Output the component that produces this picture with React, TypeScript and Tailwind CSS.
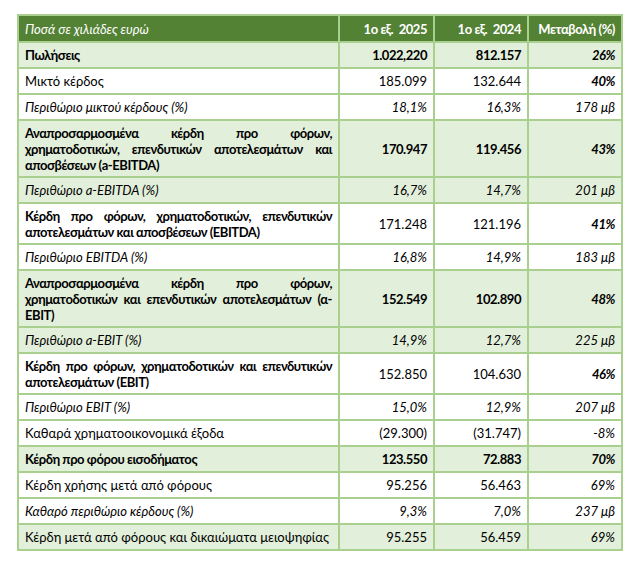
import React from "react";

// ─── Data ─────────────────────────────────────────────────────────────────

type Row = {
  label: string;
  v25: string;
  v24: string;
  change: string;
  tone?: "green";
  style: "bold" | "italic" | "plain";
  valuesBold?: boolean;
  changeBold?: boolean;
};

const ROWS: Row[] = [
  { label: "Πωλήσεις", v25: "1.022,220", v24: "812.157", change: "26%", tone: "green", style: "bold", valuesBold: true, changeBold: true },
  { label: "Μικτό κέρδος", v25: "185.099", v24: "132.644", change: "40%", style: "plain", changeBold: true },
  { label: "Περιθώριο μικτού κέρδους (%)", v25: "18,1%", v24: "16,3%", change: "178 μβ", style: "italic" },
  {
    label: "Αναπροσαρμοσμένα κέρδη προ φόρων, χρηματοδοτικών, επενδυτικών αποτελεσμάτων και αποσβέσεων (a-EBITDA)",
    v25: "170.947", v24: "119.456", change: "43%", tone: "green", style: "bold", valuesBold: true, changeBold: true,
  },
  { label: "Περιθώριο a-EBITDA (%)", v25: "16,7%", v24: "14,7%", change: "201 μβ", tone: "green", style: "italic" },
  {
    label: "Κέρδη προ φόρων, χρηματοδοτικών, επενδυτικών αποτελεσμάτων και αποσβέσεων (EBITDA)",
    v25: "171.248", v24: "121.196", change: "41%", style: "bold", changeBold: true,
  },
  { label: "Περιθώριο EBITDA (%)", v25: "16,8%", v24: "14,9%", change: "183 μβ", style: "italic" },
  {
    label: "Αναπροσαρμοσμένα κέρδη προ φόρων, χρηματοδοτικών και επενδυτικών αποτελεσμάτων (α-EBIT)",
    v25: "152.549", v24: "102.890", change: "48%", tone: "green", style: "bold", valuesBold: true, changeBold: true,
  },
  { label: "Περιθώριο a-EBIT (%)", v25: "14,9%", v24: "12,7%", change: "225 μβ", tone: "green", style: "italic" },
  {
    label: "Κέρδη προ φόρων, χρηματοδοτικών και επενδυτικών αποτελεσμάτων (EBIT)",
    v25: "152.850", v24: "104.630", change: "46%", style: "bold", changeBold: true,
  },
  { label: "Περιθώριο EBIT (%)", v25: "15,0%", v24: "12,9%", change: "207 μβ", style: "italic" },
  { label: "Καθαρά χρηματοοικονομικά έξοδα", v25: "(29.300)", v24: "(31.747)", change: "-8%", style: "plain" },
  { label: "Κέρδη προ φόρου εισοδήματος", v25: "123.550", v24: "72.883", change: "70%", tone: "green", style: "bold", valuesBold: true, changeBold: true },
  { label: "Κέρδη χρήσης μετά από φόρους", v25: "95.256", v24: "56.463", change: "69%", style: "plain" },
  { label: "Καθαρό περιθώριο κέρδους (%)", v25: "9,3%", v24: "7,0%", change: "237 μβ", style: "italic" },
  { label: "Κέρδη μετά από φόρους και δικαιώματα μειοψηφίας", v25: "95.255", v24: "56.459", change: "69%", tone: "green", style: "plain" },
];

// ─── Component ────────────────────────────────────────────────────────────

export default function App() {
  const cell = "border-2 border-[#a9d08e] px-[6px] py-[3.5px] align-middle";
  const num = `${cell} text-right`;
  const bold = "font-bold tracking-[-0.45px]";

  return (
    <div className="min-h-[563px] w-[640px] bg-white pt-[14px] pl-[17px] font-['Lato',sans-serif] text-[13px] leading-[16px] text-black">
      <table className="w-[606px] table-fixed border-collapse">
        <colgroup>
          <col className="w-[321px]" />
          <col className="w-[95px]" />
          <col className="w-[94px]" />
          <col className="w-[94px]" />
        </colgroup>
        <thead>
          <tr className="h-[27px] bg-[#548235] text-white">
            <th className={`${cell} text-left font-normal italic`}>Ποσά σε χιλιάδες ευρώ</th>
            <th className={`${num} ${bold} whitespace-pre`}>1ο εξ.  2025</th>
            <th className={`${num} ${bold} whitespace-pre`}>1ο εξ.  2024</th>
            <th className={`${num} ${bold} whitespace-nowrap`}>Μεταβολή (%)</th>
          </tr>
        </thead>
        <tbody>
          {ROWS.map((r) => {
            const labelCls =
              r.style === "bold" ? bold : r.style === "italic" ? "italic" : "";
            const valueCls = r.style === "italic" ? "italic" : r.valuesBold ? bold : "";
            return (
              <tr key={r.label} className={`h-[26px] ${r.tone === "green" ? "bg-[#e2efda]" : "bg-white"}`}>
                <td className={`${cell} text-justify ${labelCls}`}>{r.label}</td>
                <td className={`${num} ${valueCls}`}>{r.v25}</td>
                <td className={`${num} ${valueCls}`}>{r.v24}</td>
                <td className={`${num} italic ${r.changeBold ? bold : ""}`}>{r.change}</td>
              </tr>
            );
          })}
        </tbody>
      </table>
    </div>
  );
}
